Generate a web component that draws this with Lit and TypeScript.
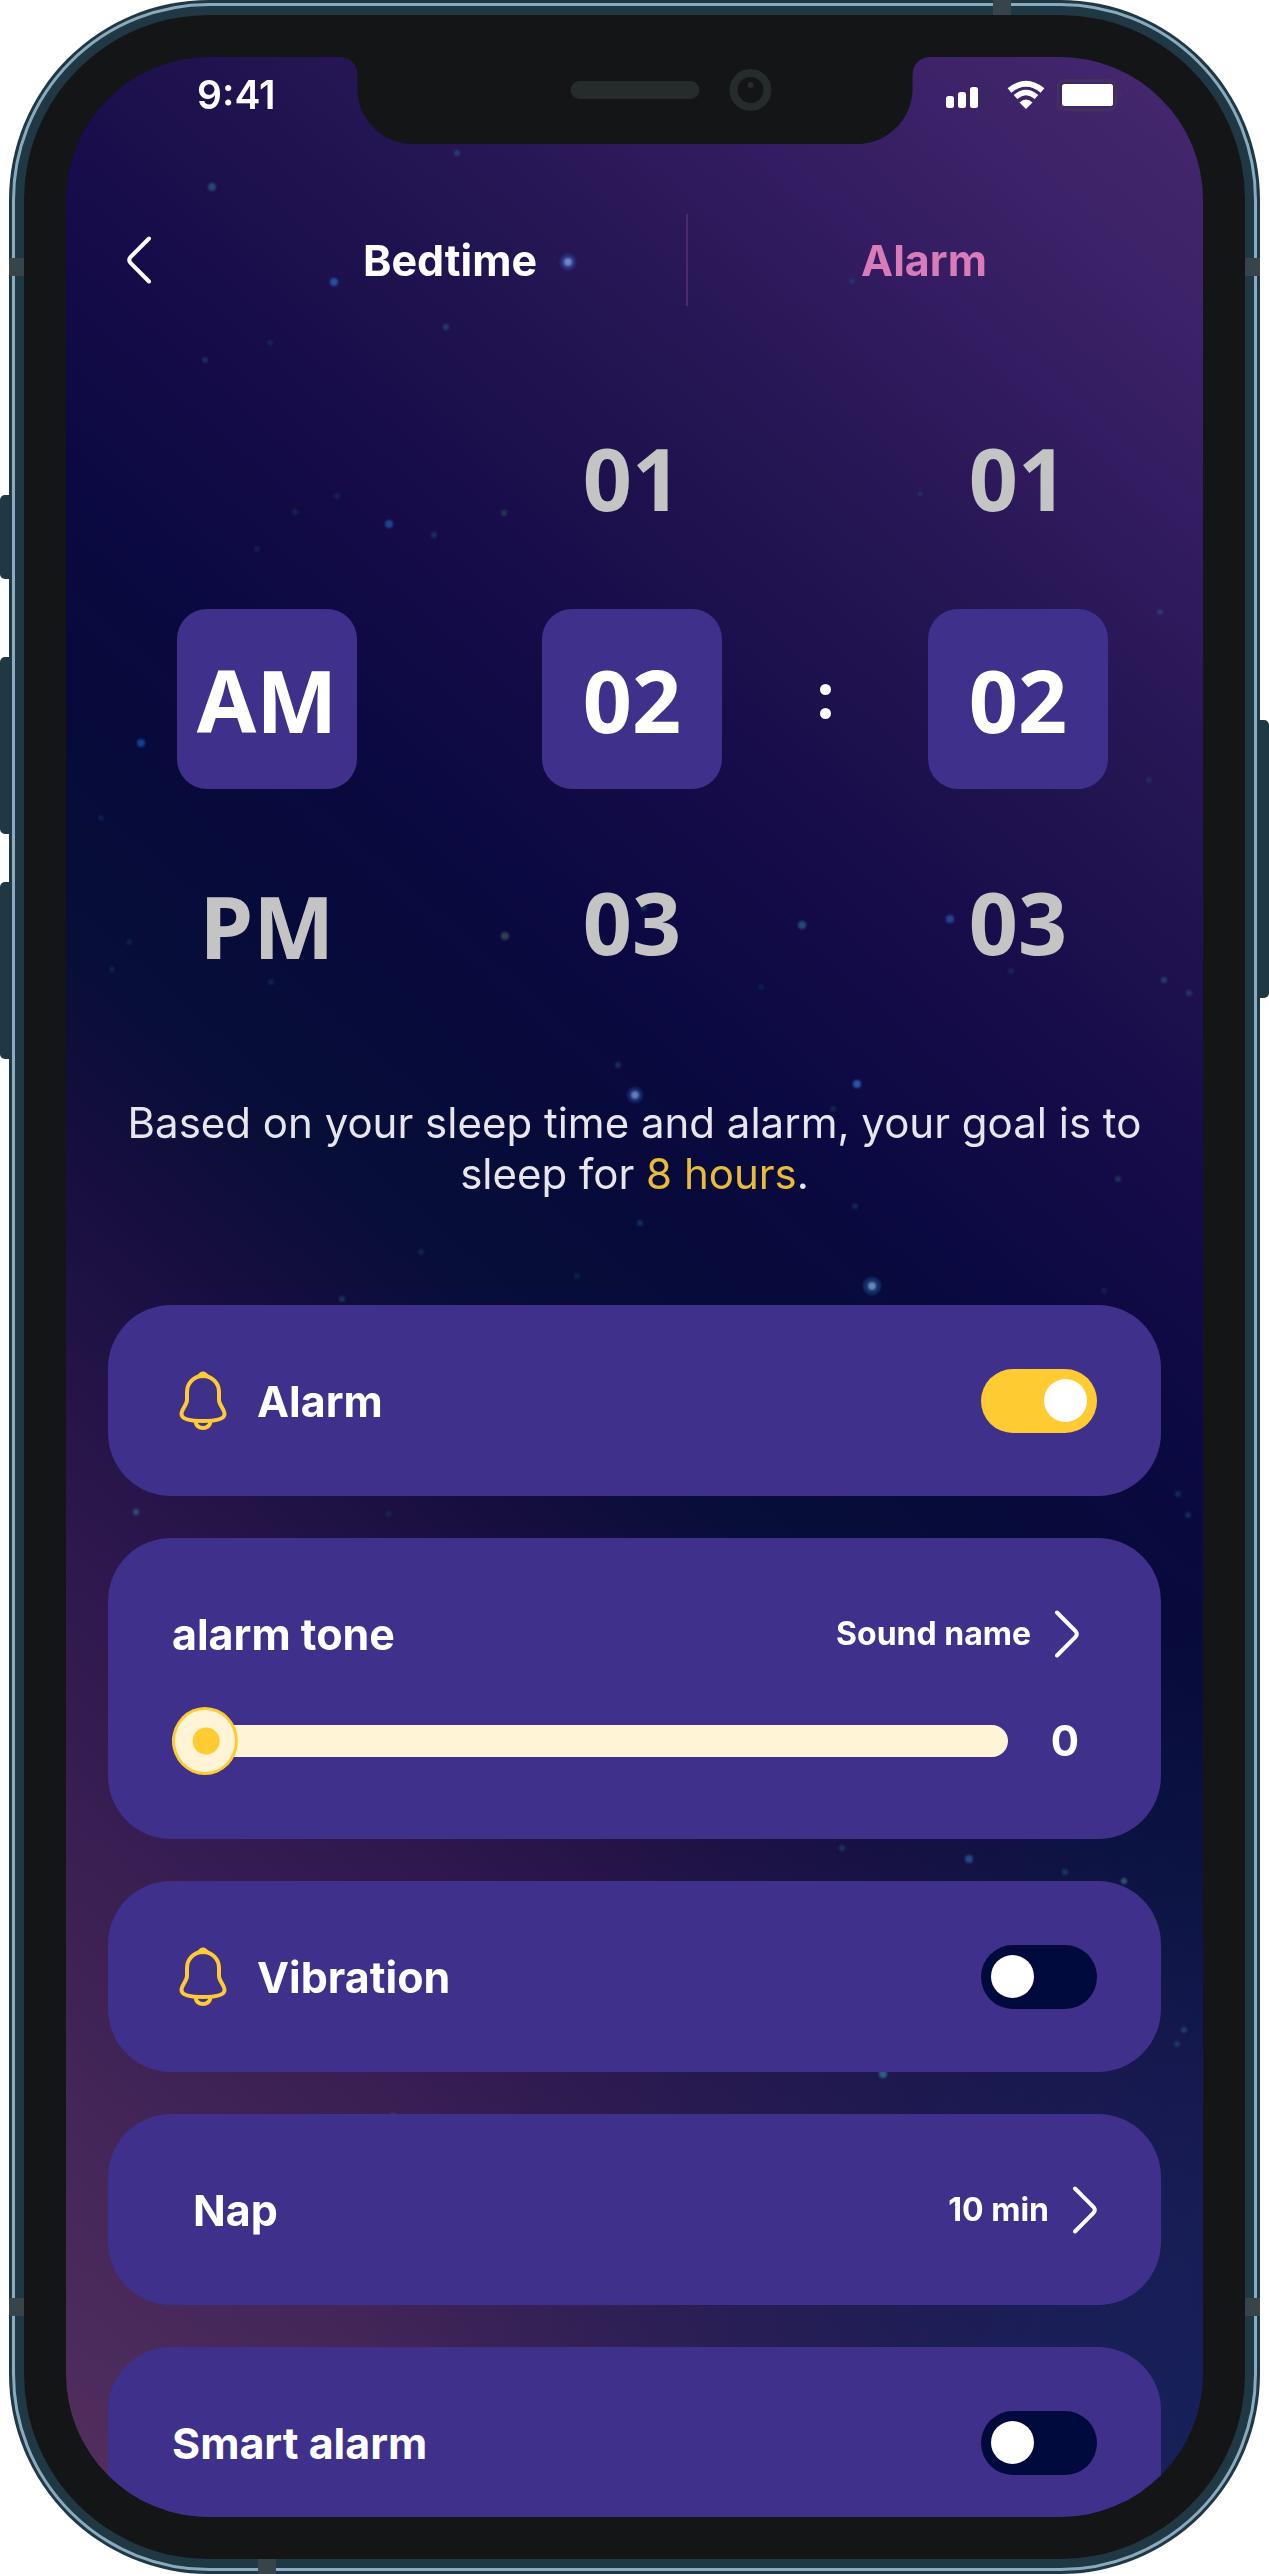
import { LitElement, html, css, svg } from "lit";
import { customElement, property, state } from "lit/decorators.js";

type Star = [x: number, y: number, r: number, fill: string, opacity: number];

const STARS: Star[] = [
  [502, 205, 4, "#b9a8e0", 0.9], [502, 205, 8, "#2f5fc0", 0.4],
  [268, 225, 4, "#2a5fb8", 0.8], [146, 130, 4, "#2f6a88", 0.6],
  [391, 96, 3, "#27507f", 0.7], [380, 270, 3, "#1f5f80", 0.6],
  [139, 303, 3, "#1b5070", 0.5], [204, 286, 3, "#1b4060", 0.4],
  [786, 224, 3, "#2f4080", 0.5], [323, 467, 4, "#2352a0", 0.8],
  [368, 478, 3, "#1d4a70", 0.6], [438, 456, 3, "#20584a", 0.6],
  [271, 439, 3, "#1b4850", 0.4], [229, 455, 3, "#1b4850", 0.4],
  [75, 686, 4, "#1c4ba8", 0.8], [35, 761, 3, "#143c70", 0.4],
  [439, 879, 4, "#3c5a58", 0.7], [205, 925, 3, "#143c60", 0.5],
  [63, 885, 3, "#143c60", 0.4], [46, 912, 3, "#143c60", 0.4],
  [191, 492, 3, "#143c60", 0.4], [1094, 555, 3, "#2b4c88", 0.6],
  [1083, 723, 3, "#2b4c78", 0.4], [736, 868, 4, "#2d6494", 0.7],
  [884, 862, 4, "#2b52a8", 0.8], [1098, 923, 3, "#2b5c88", 0.6],
  [1123, 936, 3, "#2b5c88", 0.5], [945, 914, 3, "#1f4668", 0.4],
  [695, 930, 3, "#1f4668", 0.3], [854, 437, 2, "#2b5c88", 0.5],
  [578, 851, 3, "#1f5668", 0.5], [552, 1008, 3, "#1d4a70", 0.6],
  [569, 1038, 4, "#b0a9dc", 0.85], [569, 1038, 8, "#1f56a8", 0.4],
  [791, 1027, 4, "#2b62b8", 0.85], [767, 1052, 3, "#17405c", 0.5],
  [1052, 1122, 3, "#1f5068", 0.6], [789, 1149, 3, "#17405c", 0.6],
  [574, 1166, 3, "#17407c", 0.6], [355, 1195, 3, "#17405c", 0.5],
  [511, 1219, 3, "#17405c", 0.4], [276, 1242, 3, "#24486c", 0.6],
  [806, 1229, 4, "#b0b9e8", 0.85], [806, 1229, 9, "#1f66a8", 0.4],
  [1038, 1234, 3, "#17405c", 0.4], [70, 1455, 3, "#3a6a94", 0.7],
  [1112, 1437, 3, "#1f5068", 0.5], [323, 1457, 3, "#17405c", 0.4],
  [1122, 1458, 3, "#1f5068", 0.5], [776, 1791, 3, "#1f5068", 0.6],
  [903, 1802, 4, "#2b5298", 0.8], [999, 1815, 3, "#1f5068", 0.6],
  [1058, 1824, 3, "#4a6a94", 0.7], [1118, 1973, 3, "#2b5288", 0.6],
  [1111, 1987, 3, "#2b5288", 0.5], [817, 2017, 4, "#3a7a94", 0.7],
  [327, 2058, 3, "#4a4a74", 0.5],
];

const chevron = (direction: "left" | "right") => html`
  <svg width="24" height="48" viewBox="0 0 24 48" fill="none" aria-hidden="true">
    <path
      d=${direction === "left" ? "M22 2.500 3.500 21Q1 24 3.500 27L22 45.500" : "M2 2.500 20.500 21Q23 24 20.500 27L2 45.500"}
      stroke="#fff" stroke-width="4" stroke-linecap="round" />
  </svg>`;

const bell = html`
  <svg width="48" height="60" viewBox="0 0 48 60" fill="none" aria-hidden="true">
    <path
      d="M24 5C15 5 8 12 8 21V29C8 34 2.500 38 2.500 43C2.500 48.500 13 50 24 50C35 50 45.500 48.500 45.500 43C45.500 38 40 34 40 29V21C40 12 33 5 24 5Z"
      stroke="#ffcb33" stroke-width="4" />
    <path d="M17.500 5.500Q20.500 0.500 24 0.500Q27.500 0.500 30.500 5.500Q24 9 17.500 5.500Z" fill="#ffcb33" />
    <path d="M16.500 51C17.500 55 20.500 57 24 57C27.500 57 30.500 55 31.500 51" stroke="#ffcb33" stroke-width="4" />
  </svg>`;

@customElement("toggle-switch")
export class ToggleSwitch extends LitElement {
  @property({ type: Boolean }) on = false;
  @property() label = "";

  static styles = css`
    :host { display: block; }
    .switch {
      appearance: none;
      display: flex;
      align-items: center;
      box-sizing: border-box;
      width: 116px;
      height: 64px;
      margin: 0;
      padding: 0 10px;
      border-radius: 32px;
      background: #000a3c;
      cursor: pointer;
    }
    .switch::before {
      content: "";
      width: 43px;
      height: 43px;
      border-radius: 50%;
      background: #fff;
    }
    .switch:checked { background: #ffcb33; justify-content: flex-end; }
  `;

  render() {
    return html`<input
      class="switch" type="checkbox" role="switch" aria-label=${this.label}
      .checked=${this.on}
      @change=${(e: Event) => (this.on = (e.target as HTMLInputElement).checked)} />`;
  }
}

@customElement("time-wheel")
export class TimeWheel extends LitElement {
  @property({ type: Array }) values: string[] = [];
  @property() value = "";

  static styles = css`
    :host { display: flex; flex-direction: column; gap: 42px; }
    .item {
      width: 180px;
      height: 180px;
      padding: 0;
      border: 0;
      border-radius: 30px;
      background: none;
      color: #c4c4c4;
      font: 700 86px "Noto Sans", sans-serif;
      cursor: pointer;
    }
    .selected { background: #3e308b; color: #fff; }
  `;

  render() {
    return this.values.map(
      (v) => html`<button
        class="item ${v === this.value ? "selected" : ""}"
        aria-pressed=${v === this.value ? "true" : "false"}
        @click=${() => (this.value = v)}>${v}</button>`
    );
  }
}

@customElement("app-root")
export class AppRoot extends LitElement {
  @state() private volume = 0;

  static styles = css`
    :host {
      display: block;
      background: #fff;
      color: #fff;
      font-family: Inter, "Liberation Sans", sans-serif;
    }
    .device {
      position: relative;
      box-sizing: border-box;
      height: 100vh;
      padding: 0 9px;
    }
    .frame {
      position: relative;
      box-sizing: border-box;
      height: 100%;
      padding: 15px;
      border-radius: 200px;
      background: #203744;
    }
    .rim {
      position: absolute;
      inset: 3px;
      border: 3px solid #8aaabf;
      border-radius: 197px;
    }
    .band { position: absolute; background: #37444a; }
    .band.side { left: 0; right: 0; height: 18px; }
    .band.upper { top: 258px; }
    .band.lower { bottom: 258px; }
    .band.end { width: 18px; height: 15px; }
    .band.top { top: 0; right: 249px; }
    .band.bottom { bottom: 0; left: 249px; }
    .key { position: absolute; width: 9px; background: #203744; }
    .key.left { left: 0; border-radius: 5px 0 0 5px; }
    .key.right { right: 0; border-radius: 0 5px 5px 0; top: 720px; height: 278px; }
    .key.mute { top: 495px; height: 84px; }
    .key.up { top: 657px; height: 177px; }
    .key.down { top: 882px; height: 177px; }
    .bezel {
      position: relative;
      box-sizing: border-box;
      height: 100%;
      padding: 42px;
      border-radius: 185px;
      background: #131516;
    }
    .screen {
      position: relative;
      height: 100%;
      overflow: hidden;
      border-radius: 143px;
      background:
        radial-gradient(ellipse 900px 800px at 105% 96%, #16205a 0%, #16205acc 25%, #16205a00 100%),
        linear-gradient(221deg, #46286f 0%, #3c2268 8%, #331c61 14%, #281756 20%, #1e114e 27%,
          #140b48 34%, #0b0941 41%, #070a3a 47%, #070e38 54%, #160e3e 60%, #2b164b 70%, #432558 87%, #52305f 100%);
    }
    .sky { position: absolute; inset: 0; width: 100%; height: 100%; }
    .stars { filter: blur(1px); }
    .notch { position: absolute; top: 0; left: 50%; transform: translateX(-50%); }
    .content { position: relative; display: flex; flex-direction: column; }
    .status {
      display: flex;
      align-items: center;
      justify-content: space-between;
      height: 76px;
      padding: 0 78px 0 131px;
    }
    .clock { font-size: 39px; line-height: 48px; font-weight: 600; }
    .indicators { display: flex; align-items: center; gap: 11px; }
    .header {
      display: grid;
      grid-template-columns: 148px 1fr 2px 1fr;
      height: 92px;
      margin-top: 81px;
      padding-right: 43px;
    }
    .back, .tab, .more {
      padding: 0;
      border: 0;
      background: none;
      color: inherit;
      font-family: inherit;
      cursor: pointer;
    }
    .back { display: flex; align-items: center; padding-left: 61px; }
    .tab { font-size: 43px; font-weight: 700; }
    .tab.current { color: #d97bb9; }
    .divider { background: #482a75; }
    .picker {
      display: grid;
      grid-template-columns: 180px 185fr 180px 206fr 180px;
      margin-top: 81px;
      padding: 0 95px 0 111px;
    }
    .period { padding-top: 222px; gap: 46px; }
    .colon {
      grid-column: 4;
      align-self: center;
      justify-self: center;
      display: flex;
      flex-direction: column;
      gap: 13px;
    }
    .dot { width: 11px; height: 11px; border-radius: 50%; background: #fff; }
    .goal {
      margin: 82px 42px 0;
      color: #e6e6ec;
      font-size: 42px;
      line-height: 51px;
      text-align: center;
    }
    .hours { color: #e9bc37; }
    .cards {
      display: flex;
      flex-direction: column;
      gap: 42px;
      margin-top: 106px;
      padding: 0 42px;
    }
    .card {
      box-sizing: border-box;
      min-height: 191px;
      padding: 0 64px;
      border-radius: 63px;
      background: #3e308b;
      display: flex;
      flex-direction: column;
      justify-content: center;
      gap: 48px;
    }
    .row { display: flex; align-items: center; justify-content: space-between; }
    .name {
      display: flex;
      align-items: center;
      gap: 30px;
      font-size: 43px;
      line-height: 50px;
      font-weight: 700;
    }
    .name.inset { padding-left: 7px; }
    .name.indent { padding-left: 21px; }
    .more {
      display: flex;
      align-items: center;
      gap: 24px;
      font-size: 32px;
      line-height: 48px;
      font-weight: 700;
    }
    .tone { min-height: 301px; padding-top: 6px; }
    .tone .more { padding-right: 18px; }
    .level { display: flex; align-items: center; gap: 43px; }
    .slider {
      appearance: none;
      flex: 1;
      min-width: 0;
      height: 68px;
      margin: 0;
      background: none;
      cursor: pointer;
    }
    .slider::-webkit-slider-runnable-track {
      height: 32px;
      border-radius: 16px;
      background: #fff4d6;
    }
    .slider::-webkit-slider-thumb {
      appearance: none;
      box-sizing: border-box;
      width: 66px;
      height: 68px;
      margin-top: -18px;
      border: 3px solid #ffcb33;
      border-radius: 50%;
      background: radial-gradient(circle at 52% 50%, #ffcb33 13px, #fff4d6 14px);
    }
    .amount {
      padding-right: 18px;
      font-size: 42px;
      line-height: 50px;
      font-weight: 700;
    }
  `;

  private notch() {
    return html`<svg class="notch" width="595" height="87" viewBox="0 0 595 87" aria-hidden="true">
      <path
        d="M0 0C14 0 20 7 20 20V32C20 62 45 87 75 87H520C550 87 575 62 575 32V20C575 7 581 0 595 0Z"
        fill="#131516" />
      <rect x="233" y="24" width="129" height="18" rx="9" fill="#262b2c" />
      <circle cx="413" cy="33" r="17" fill="none" stroke="#262b2c" stroke-width="8" />
      <circle cx="413" cy="28" r="3" fill="#262b2c" />
    </svg>`;
  }

  private indicators() {
    return html`<div class="indicators" role="img" aria-label="Signal, Wi-Fi and battery">
      <svg width="50" height="32" viewBox="0 0 50 32">
        <rect x="0" y="17" width="8" height="12" rx="2.500" fill="#fff" />
        <rect x="12" y="13" width="8" height="16" rx="2.500" fill="#fff" />
        <rect x="24" y="8" width="8" height="21" rx="2.500" fill="#fff" />
        <rect x="36" y="3" width="8" height="26" rx="2.500" fill="#3a2660" />
      </svg>
      <svg width="38" height="32" viewBox="0 0 38 32" fill="none" stroke="#fff">
        <path d="M2.500 11.500Q19 -2 35.500 11.500" stroke-width="6" />
        <path d="M8.500 18Q19 9 29.500 18" stroke-width="5.500" />
        <path d="M12.500 23.500Q19 17.500 25.500 23.500L19 30Z" fill="#fff" stroke="none" />
      </svg>
      <svg width="69" height="32" viewBox="0 0 69 32">
        <rect x="2" y="1.500" width="58" height="29" rx="6" fill="none" stroke="#42305f" stroke-width="3" />
        <rect x="6" y="5" width="51" height="22" rx="2.500" fill="#fff" />
        <path d="M64 12Q67 16 64 20Z" fill="#42305f" />
      </svg>
    </div>`;
  }

  render() {
    return html`
      <div class="device">
        <span class="key left mute"></span>
        <span class="key left up"></span>
        <span class="key left down"></span>
        <span class="key right"></span>
        <div class="frame">
          <span class="rim"></span>
          <span class="band side upper"></span>
          <span class="band side lower"></span>
          <span class="band end top"></span>
          <span class="band end bottom"></span>
          <div class="bezel">
            <div class="screen">
              <svg class="sky" viewBox="0 0 1137 2460" preserveAspectRatio="xMidYMin slice" aria-hidden="true">
                <g class="stars">
                  ${STARS.map(([x, y, r, fill, o]) => svg`<circle cx=${x} cy=${y} r=${r} fill=${fill} opacity=${o} />`)}
                </g>
              </svg>
              ${this.notch()}
              <main class="content">
                <div class="status">
                  <time class="clock">9:41</time>
                  ${this.indicators()}
                </div>
                <nav class="header">
                  <button class="back" aria-label="Back">${chevron("left")}</button>
                  <button class="tab">Bedtime</button>
                  <span class="divider"></span>
                  <button class="tab current" aria-current="page">Alarm</button>
                </nav>
                <section class="picker" aria-label="Alarm time">
                  <time-wheel class="period" .values=${["AM", "PM"]} value="AM"></time-wheel>
                  <span></span>
                  <time-wheel .values=${["01", "02", "03"]} value="02"></time-wheel>
                  <div class="colon"><span class="dot"></span><span class="dot"></span></div>
                  <time-wheel .values=${["01", "02", "03"]} value="02"></time-wheel>
                </section>
                <p class="goal">
                  Based on your sleep time and alarm, your goal is to sleep for
                  <span class="hours">8 hours</span>.
                </p>
                <div class="cards">
                  <section class="card">
                    <div class="row">
                      <span class="name inset">${bell}Alarm</span>
                      <toggle-switch label="Alarm" on></toggle-switch>
                    </div>
                  </section>
                  <section class="card tone">
                    <div class="row">
                      <label class="name" for="volume">alarm tone</label>
                      <button class="more">Sound name ${chevron("right")}</button>
                    </div>
                    <div class="level">
                      <input
                        id="volume" class="slider" type="range" min="0" max="100"
                        .value=${String(this.volume)}
                        @input=${(e: Event) => (this.volume = Number((e.target as HTMLInputElement).value))} />
                      <output class="amount" for="volume">${this.volume}</output>
                    </div>
                  </section>
                  <section class="card">
                    <div class="row">
                      <span class="name inset">${bell}Vibration</span>
                      <toggle-switch label="Vibration"></toggle-switch>
                    </div>
                  </section>
                  <section class="card">
                    <div class="row">
                      <span class="name indent">Nap</span>
                      <button class="more">10 min ${chevron("right")}</button>
                    </div>
                  </section>
                  <section class="card">
                    <div class="row">
                      <span class="name">Smart alarm</span>
                      <toggle-switch label="Smart alarm"></toggle-switch>
                    </div>
                  </section>
                </div>
              </main>
            </div>
          </div>
        </div>
      </div>
    `;
  }
}
